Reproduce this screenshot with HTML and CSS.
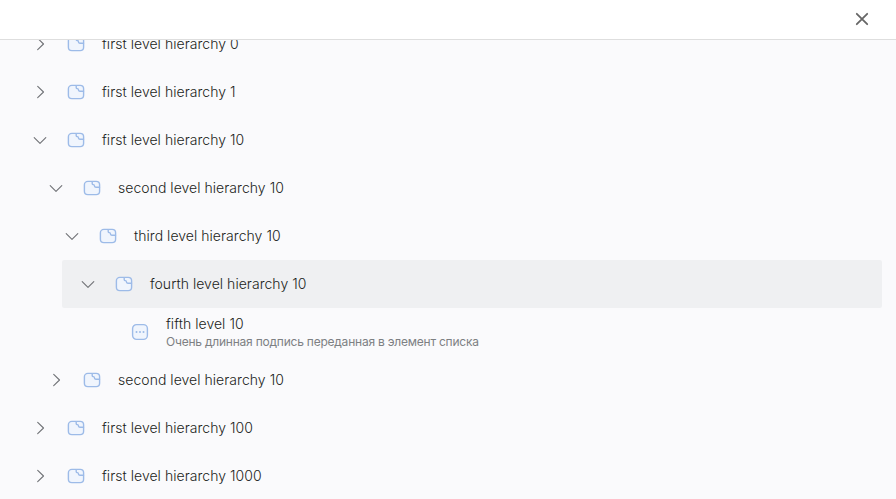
FILE: index.html
```html
<!DOCTYPE html>
<html lang="ru">
<head>
<meta charset="utf-8">
<title>Hierarchy</title>
<link rel="stylesheet" href="styles.css">
</head>
<body>
<svg class="sprite" width="0" height="0">
  <symbol id="right" viewBox="0 0 16 16"><path d="M5.7 2.3 11.5 8l-5.8 5.7"/></symbol>
  <symbol id="down" viewBox="0 0 16 16"><path d="M2.2 5.6 8 11.4l5.8-5.8"/></symbol>
  <symbol id="folder" viewBox="0 0 18 18"><rect x="1.4" y="2.4" width="15.2" height="13.2" rx="3.4"/><path d="M9.2 2.6V4.4Q9.2 5.6 10.4 5.6 11.4 5.6 11.4 6.8 11.4 8.2 12.8 8.2H16.5"/></symbol>
  <symbol id="item" viewBox="0 0 18 18"><rect x="1.6" y="1.6" width="14.8" height="14.8" rx="4"/><path class="dots" d="M5.5 9h.01M9 9h.01M12.5 9h.01"/></symbol>
</svg>
<div class="window">
  <header class="header">
    <svg class="close" viewBox="0 0 16 16"><path d="m2.8 2.8 10.4 10.4M13.2 2.8 2.8 13.2"/></svg>
  </header>
  <main class="viewport">
    <ul class="tree">
      <li class="row"><svg class="arrow"><use href="#right"/></svg><svg class="icon"><use href="#folder"/></svg><span class="title">first level hierarchy 0</span></li>
      <li class="row"><svg class="arrow"><use href="#right"/></svg><svg class="icon"><use href="#folder"/></svg><span class="title">first level hierarchy 1</span></li>
      <li class="row"><svg class="arrow"><use href="#down"/></svg><svg class="icon"><use href="#folder"/></svg><span class="title">first level hierarchy 10</span></li>
      <li class="row level-2"><svg class="arrow"><use href="#down"/></svg><svg class="icon"><use href="#folder"/></svg><span class="title">second level hierarchy 10</span></li>
      <li class="row level-3"><svg class="arrow"><use href="#down"/></svg><svg class="icon"><use href="#folder"/></svg><span class="title">third level hierarchy 10</span></li>
      <li class="row level-4 active"><svg class="arrow"><use href="#down"/></svg><svg class="icon"><use href="#folder"/></svg><span class="title">fourth level hierarchy 10</span></li>
      <li class="row level-5"><svg class="icon"><use href="#item"/></svg><div class="text"><span class="title">fifth level 10</span><span class="caption">Очень длинная подпись переданная в элемент списка</span></div></li>
      <li class="row level-2"><svg class="arrow"><use href="#right"/></svg><svg class="icon"><use href="#folder"/></svg><span class="title">second level hierarchy 10</span></li>
      <li class="row"><svg class="arrow"><use href="#right"/></svg><svg class="icon"><use href="#folder"/></svg><span class="title">first level hierarchy 100</span></li>
      <li class="row"><svg class="arrow"><use href="#right"/></svg><svg class="icon"><use href="#folder"/></svg><span class="title">first level hierarchy 1000</span></li>
    </ul>
  </main>
</div>
</body>
</html>
```
FILE: styles.css
```css
* { box-sizing: border-box; }
body { margin: 0; font-family: Inter, "Liberation Sans", sans-serif; background: #fafafc; color: #1c1e21; }
.sprite { display: block; }
svg { fill: none; stroke-linecap: round; stroke-linejoin: round; }
.window { display: flex; flex-direction: column; height: 499px; overflow: hidden; }
.header { display: flex; flex: 0 0 40px; align-items: center; justify-content: flex-end; padding: 0 26px 2px 0; background: #fff; border-bottom: 1px solid #dedede; }
.close { width: 16px; height: 16px; stroke: #666; stroke-width: 1.8; }
.viewport { flex: 1; min-height: 0; overflow: hidden; }
.tree { margin: -20px 14px 0; padding: 0; list-style: none; }
.row { display: flex; align-items: center; height: 48px; padding-left: 18px; }
.level-2 { margin-left: 16px; }
.level-3 { margin-left: 32px; }
.level-4 { margin-left: 48px; }
.level-5 { margin-left: 64px; padding-left: 53px; }
.active { background: #eff0f2; border-radius: 2px; }
.arrow { width: 16px; height: 16px; margin-right: 19px; stroke: #707276; stroke-width: 1.1; }
.icon { width: 18px; height: 18px; margin-right: 17px; stroke: #9dbbe8; stroke-width: 1.4; fill: #f0f5fd; }
.dots { stroke-width: 2; }
.title { font-size: 14px; line-height: 20px; font-weight: 300; letter-spacing: 0.04px; white-space: nowrap; }
.text { display: flex; flex-direction: column; }
.caption { font-size: 12px; line-height: 16px; letter-spacing: -0.22px; color: #7d8083; white-space: nowrap; }
```
